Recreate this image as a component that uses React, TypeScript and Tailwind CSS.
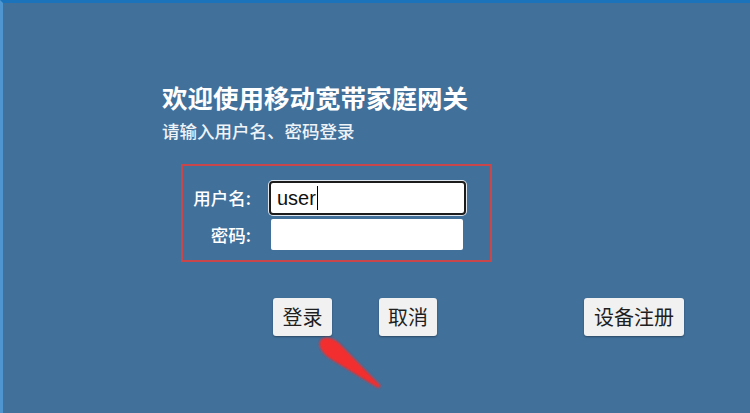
import { useState } from 'react'

const cjk = { fontFamily: '"Noto Sans CJK SC", "Noto Sans", sans-serif' }

function Btn({ label, className = '' }: { label: string; className?: string }) {
  return (
    <button
      style={cjk}
      className={`h-[38px] rounded-[3px] bg-[#f1f1f1] text-[20px] leading-none text-[#1f1f1f] shadow-[0_1px_2px_rgba(0,0,0,0.35)] ${className}`}
    >
      {label}
    </button>
  )
}

export default function App() {
  const [user] = useState('user')

  return (
    <div className="relative w-[750px] h-[413px] overflow-hidden bg-[#41709a] border-t-[3px] border-t-[#1b74bb] border-l-[3px] border-l-[#4f95d0]">
      <div className="pt-[81px] pl-[159px]" style={cjk}>
        <h1 className="text-[25.5px] font-bold leading-none text-white">欢迎使用移动宽带家庭网关</h1>
        <p className="mt-[12px] text-[17.5px] font-medium leading-none text-[#eef3f8]">请输入用户名、密码登录</p>

        {/* highlighted login fields */}
        <div className="mt-[25px] ml-[19px] w-[311px] h-[98px] border-2 border-[#c9464a] pt-[15px]">
          <div className="grid grid-cols-[68px_1fr] gap-x-[18px] gap-y-[4px] items-center">
            <label className="text-right text-[17.5px] font-medium leading-none text-white whitespace-nowrap">用户名:</label>
            <div className="w-[197px] h-[34px] rounded-[4px] border-2 border-[#1c1c1c] bg-white shadow-[0_0_0_1px_#dfe6ee] flex items-center pl-[6px]">
              <span className="text-[20px] leading-none text-[#111]" style={{ fontFamily: '"Liberation Sans", Arial, sans-serif' }}>
                {user}
              </span>
              <span className="ml-[1px] w-[1px] h-[24px] bg-black" />
            </div>
            <label className="text-right text-[17.5px] font-medium leading-none text-white whitespace-nowrap">密码:</label>
            <div className="ml-[2px] w-[192px] h-[31px] rounded-[2px] bg-white" />
          </div>
        </div>

        <div className="mt-[36px] ml-[111px] flex">
          <Btn label="登录" className="w-[59px]" />
          <Btn label="取消" className="ml-[47px] w-[58px]" />
          <Btn label="设备注册" className="ml-[147px] w-[100px]" />
        </div>
      </div>

      {/* red annotation arrow */}
      <svg className="absolute left-0 top-0 pointer-events-none" width="750" height="413" viewBox="0 0 750 413">
        <defs>
          <filter id="soft" x="-20%" y="-20%" width="140%" height="140%">
            <feGaussianBlur stdDeviation="0.8" />
          </filter>
        </defs>
        <path
          d="M318 337 C322 332 333 336 337 341 L378 383 L375 385 L326 355 C318 349 314 341 318 337 Z"
          fill="#f22d2d"
          filter="url(#soft)"
        />
      </svg>
    </div>
  )
}
